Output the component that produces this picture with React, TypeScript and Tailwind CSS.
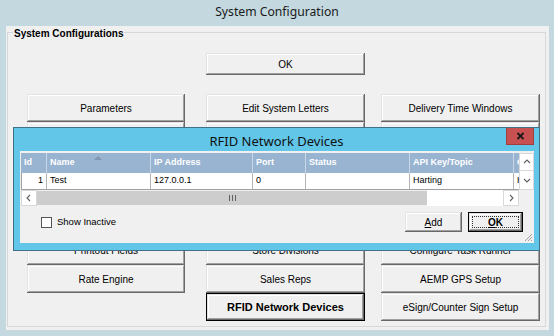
import React from "react";

const bevel =
  "shadow-[inset_-1px_-1px_#696969,inset_1px_1px_#e3e3e3,inset_-2px_-2px_#a0a0a0,inset_2px_2px_#ffffff]";

function Btn({
  label,
  h,
  def,
}: {
  label: string | null;
  h: number;
  def?: boolean;
}) {
  if (label === null) return <div style={{ height: h }} />;
  return (
    <div style={{ height: h }} className="w-full">
      {def ? (
        <div className="w-full h-full border border-black">
          <div
            className={`w-full h-full bg-[#f0f0f0] ${bevel} flex items-center justify-center text-[11px] font-bold text-black`}
          >
            {label}
          </div>
        </div>
      ) : (
        <div
          className={`w-full h-full bg-[#f0f0f0] ${bevel} flex items-center justify-center text-[10px] text-black`}
        >
          {label}
        </div>
      )}
    </div>
  );
}

const heights = [28, 29, 28, 29, 28, 29, 28, 28];
const col1 = ["Parameters", "", "", "", "", "Printout Fields", "Rate Engine", null];
const col2 = [
  "Edit System Letters",
  "",
  "",
  "",
  "",
  "Store Divisions",
  "Sales Reps",
  "RFID Network Devices",
];
const col3 = [
  "Delivery Time Windows",
  "",
  "",
  "",
  "",
  "Configure Task Runner",
  "AEMP GPS Setup",
  "eSign/Counter Sign Setup",
];

function Chevron({ dir }: { dir: "l" | "r" | "u" | "d" }) {
  const d =
    dir === "l"
      ? "M5 1 L2 4 L5 7"
      : dir === "r"
      ? "M3 1 L6 4 L3 7"
      : dir === "u"
      ? "M1 5 L4 2 L7 5"
      : "M1 3 L4 6 L7 3";
  return (
    <svg width="8" height="8" viewBox="0 0 8 8">
      <path d={d} fill="none" stroke="#606060" strokeWidth="1.1" />
    </svg>
  );
}

const cols = [
  { w: 26, head: "Id", val: "1", right: true },
  { w: 104, head: "Name", val: "Test" },
  { w: 102, head: "IP Address", val: "127.0.0.1" },
  { w: 53, head: "Port", val: "0" },
  { w: 104, head: "Status", val: "" },
  { w: 104, head: "API Key/Topic", val: "Harting" },
  { w: 5, head: "C", val: "H", last: true },
];

export default function App() {
  return (
    <div
      className="w-[554px] h-[336px] bg-[#c4d8df] flex flex-col overflow-hidden relative"
      style={{ fontFamily: '"Liberation Sans", Arial, sans-serif' }}
    >
      <div
        className="h-[26px] flex items-center justify-center text-[12.2px] text-[#1a1a1a] pb-[1px]"
        style={{ fontFamily: '"Noto Sans", sans-serif' }}
      >
        System Configuration
      </div>
      <div className="ml-[6px] w-[543px] h-[304px] bg-[#f0f0f0]">
        <fieldset className="ml-[1px] w-[539px] h-[301px] border border-[#d5d9dc]">
          <legend className="ml-[5px] px-[1px] text-[10px] font-bold leading-[12px] text-black">
            <span className="inline-block translate-y-[2px]">System Configurations</span>
          </legend>
          <div className="pl-[19px] pt-[15px]">
            <div className="ml-[179px] w-[159px]">
              <Btn label="OK" h={22} />
            </div>
            <div className="mt-[19px] flex">
              <div className="w-[158px] flex flex-col">
                {col1.map((l, i) => (
                  <Btn key={i} label={l} h={heights[i]} />
                ))}
              </div>
              <div className="w-[159px] ml-[21px] flex flex-col">
                {col2.map((l, i) => (
                  <Btn key={i} label={l} h={heights[i]} def={i === 7} />
                ))}
              </div>
              <div className="w-[159px] ml-[16px] flex flex-col">
                {col3.map((l, i) => (
                  <Btn key={i} label={l} h={heights[i]} />
                ))}
              </div>
            </div>
          </div>
        </fieldset>
      </div>

      {/* RFID dialog */}
      <div className="absolute left-[13px] top-[127px] w-[527px] h-[124px] bg-[#62c6e9] border border-[#41708a] flex flex-col">
        <div className="h-[23px] relative flex items-center justify-center">
          <span
            className="text-[13px] text-[#111] leading-none mt-[4px]"
            style={{ fontFamily: '"Noto Sans", sans-serif' }}
          >
            RFID Network Devices
          </span>
          <div className="absolute right-[5px] top-[0px] w-[28px] h-[17px] bg-[#c75050] border border-[#a33c3c] border-t-0 flex items-center justify-center">
            <svg width="9" height="8" viewBox="0 0 9 8">
              <path d="M1.5 1 L7.5 7 M7.5 1 L1.5 7" stroke="#1a1a1a" strokeWidth="1.8" />
            </svg>
          </div>
        </div>
        <div className="ml-[6px] mr-[5px] h-[92px] bg-[#f0f0f0] flex flex-col relative">
          <div className="mt-[2px] ml-[1px] w-[513px] flex flex-col">
            <div className="flex h-[37px]">
              <div className="w-[498px] flex flex-col overflow-hidden">
                <div className="h-[20px] flex bg-[#99b4d1]">
                  {cols.map((c, i) => (
                    <div
                      key={i}
                      style={{ width: c.w }}
                      className={`shrink-0 h-full relative flex items-center overflow-hidden ${
                        c.last ? "" : "border-r border-[#c9d7e6]"
                      }`}
                    >
                      <span className="pl-[3px] text-[9px] font-bold text-white whitespace-nowrap">
                        {c.head}
                      </span>
                      {c.head === "Name" && (
                        <svg
                          className="absolute left-[47px] top-[3px]"
                          width="8"
                          height="4"
                          viewBox="0 0 8 4"
                        >
                          <path d="M0 4 L4 0 L8 4 Z" fill="#8095b0" />
                        </svg>
                      )}
                    </div>
                  ))}
                </div>
                <div className="h-[17px] flex bg-white border-b border-[#a0a0a0]">
                  {cols.map((c, i) => (
                    <div
                      key={i}
                      style={{ width: c.w }}
                      className={`shrink-0 h-full flex items-center overflow-hidden ${
                        c.last ? "" : "border-r border-[#b4b4b4]"
                      } ${c.right ? "justify-end pr-[3px]" : "pl-[3px]"} ${
                        i === 0 ? "border-l border-l-[#a0a0a0]" : ""
                      }`}
                    >
                      <span className="text-[9px] text-black whitespace-nowrap">
                        {c.val}
                      </span>
                    </div>
                  ))}
                </div>
              </div>
              <div className="w-[15px] flex flex-col bg-[#f0f0f0]">
                <div className="h-[18px] bg-white border border-[#d9d9d9] flex items-center justify-center">
                  <Chevron dir="u" />
                </div>
                <div className="h-[19px] bg-white border border-[#d9d9d9] border-t-0 flex items-center justify-center">
                  <Chevron dir="d" />
                </div>
              </div>
            </div>
            <div className="flex h-[16px]">
              <div className="w-[498px] flex bg-white">
                <div className="w-[16px] h-full bg-white border border-[#d9d9d9] flex items-center justify-center">
                  <Chevron dir="l" />
                </div>
                <div className="w-[390px] h-full bg-[#cdcdcd] border-y border-[#f0f0f0] flex items-center justify-center">
                  <svg width="7" height="6" viewBox="0 0 7 6">
                    <path d="M0.5 0 V6 M3.5 0 V6 M6.5 0 V6" stroke="#606060" strokeWidth="1" />
                  </svg>
                </div>
                <div className="w-[76px] h-full bg-white" />
                <div className="w-[16px] h-full bg-white border border-[#d9d9d9] flex items-center justify-center">
                  <Chevron dir="r" />
                </div>
              </div>
              <div className="w-[15px] h-full bg-[#f0f0f0]" />
            </div>
          </div>
          <div className="mt-[6px] h-[20px] flex items-center">
            <div className="ml-[21px] w-[11px] h-[11px] bg-white border border-[#555]" />
            <span className="ml-[5px] text-[9.5px] text-black">Show Inactive</span>
            <div className="ml-auto w-[57px] h-[20px]">
              <div
                className={`w-full h-full bg-[#f0f0f0] ${bevel} flex items-center justify-center text-[10px] text-black`}
              >
                <span>
                  <span className="underline">A</span>dd
                </span>
              </div>
            </div>
            <div className="ml-[6px] mr-[11px] w-[55px] h-[20px] border border-black">
              <div
                className={`w-full h-full bg-[#f0f0f0] ${bevel} flex items-center justify-center p-[3px]`}
              >
                <div className="w-full h-full border border-dotted border-[#333] flex items-center justify-center text-[10px] font-bold text-black">
                  <span>
                    <span className="underline">O</span>K
                  </span>
                </div>
              </div>
            </div>
          </div>
          <svg
            className="absolute right-[1px] bottom-[1px]"
            width="10"
            height="10"
            viewBox="0 0 10 10"
          >
            <path
              d="M9 2 L2 9 M9 5 L5 9 M9 8 L8 9"
              stroke="#a0a0a0"
              strokeWidth="1"
            />
          </svg>
        </div>
      </div>
    </div>
  );
}
